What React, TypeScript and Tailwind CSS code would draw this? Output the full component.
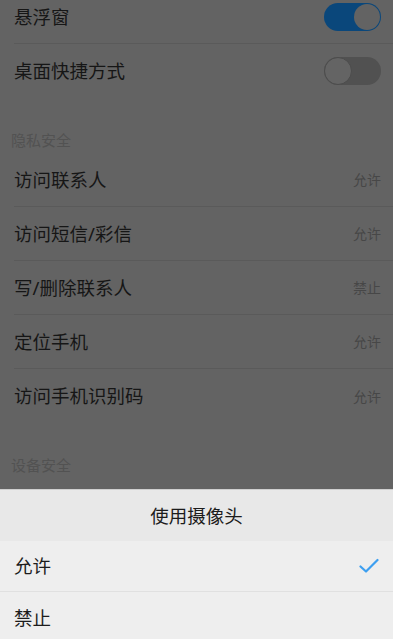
// 权限设置页 + 底部"使用摄像头"选择面板
const font = { fontFamily: '"Noto Sans", "Noto Sans CJK SC", sans-serif' };

function Toggle({ on }: { on: boolean }) {
  return on ? (
    <div className="w-[57px] h-[28px] rounded-full bg-[#0a477b] flex items-center justify-end p-[1px]">
      <div className="w-[26px] h-[26px] rounded-full bg-[#636363]" />
    </div>
  ) : (
    <div className="w-[57px] h-[28px] rounded-full bg-[#515151] flex items-center justify-start">
      <div className="w-[28px] h-[28px] rounded-full bg-[#646464] border border-[#4c4c4c]" />
    </div>
  );
}

function SwitchRow({ label, on, last }: { label: string; on: boolean; last?: boolean }) {
  return (
    <div
      className={`ml-[14px] pr-[12px] h-[54px] flex items-center justify-between ${
        last ? '' : 'border-b border-[#5a5a5a]'
      }`}
    >
      <span className="text-[18.5px] text-[#161616]">{label}</span>
      <Toggle on={on} />
    </div>
  );
}

function ValueRow({ label, value, last }: { label: string; value: string; last?: boolean }) {
  return (
    <div
      className={`ml-[14px] pr-[12px] h-[54px] flex items-center justify-between ${
        last ? '' : 'border-b border-[#5a5a5a]'
      }`}
    >
      <span className="text-[18.5px] text-[#161616]">{label}</span>
      <span className="text-[14px] text-[#474747]">{value}</span>
    </div>
  );
}

function SectionHeader({ title }: { title: string }) {
  return (
    <div className="pl-[11px] pt-[30px] h-[55px]">
      <span className="text-[15px] leading-[17px] text-[#525252]">{title}</span>
    </div>
  );
}

export default function App() {
  const privacy = [
    { label: '访问联系人', value: '允许' },
    { label: '访问短信/彩信', value: '允许' },
    { label: '写/删除联系人', value: '禁止' },
    { label: '定位手机', value: '允许' },
    { label: '访问手机识别码', value: '允许' },
  ];

  return (
    <div className="relative w-[393px] h-[639px] overflow-hidden bg-[#636363]" style={font}>
      <div className="-mt-[10px]">
        <SwitchRow label="悬浮窗" on />
        <SwitchRow label="桌面快捷方式" on={false} last />

        <SectionHeader title="隐私安全" />
        {privacy.map((p, i) => (
          <ValueRow key={p.label} label={p.label} value={p.value} last={i === privacy.length - 1} />
        ))}

        <SectionHeader title="设备安全" />
      </div>

      {/* 底部面板 */}
      <div className="absolute left-0 right-0 bottom-0 h-[150px] border-t border-[#cfcfcf]">
        <div className="h-[51px] bg-[#e8e8e8] flex items-center justify-center">
          <span className="text-[18.5px] text-[#1c1c1c]">使用摄像头</span>
        </div>
        <div className="h-[51px] bg-[#eeeeee] border-b border-[#e0e0e0] flex items-center justify-between pl-[14px] pr-[14px]">
          <span className="text-[18.5px] text-[#1c1c1c]">允许</span>
          <svg width="20" height="16" viewBox="0 0 20 16" fill="none">
            <path d="M1.5 8.5 L7 13.5 L18.5 2" stroke="#3d9ff0" strokeWidth="2.2" strokeLinecap="round" strokeLinejoin="round" />
          </svg>
        </div>
        <div className="h-[51px] bg-[#eeeeee] flex items-center pl-[14px]">
          <span className="text-[18.5px] text-[#1c1c1c]">禁止</span>
        </div>
      </div>
    </div>
  );
}
